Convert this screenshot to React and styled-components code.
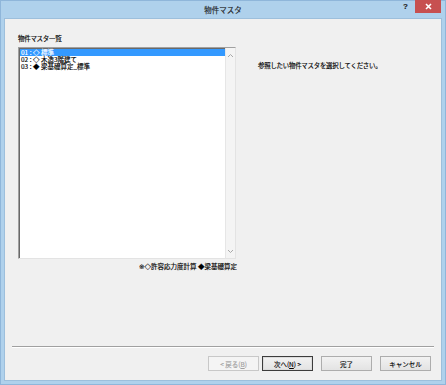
import React from "react";
import styled, { createGlobalStyle } from "styled-components";

const GlobalStyle = createGlobalStyle`
  html, body {
    margin: 0;
    padding: 0;
    background: #afd1ec;
  }
  #root {
    width: 446px;
    height: 385px;
  }
`;

const FONT = `"Noto Sans CJK JP", "Noto Sans", sans-serif`;

const rows = [
  { id: "01", mark: "◇", name: "標準" },
  { id: "02", mark: "◇", name: "木造3階建て" },
  { id: "03", mark: "◆", name: "梁基礎算定_標準" },
];

const Chevron = ({ up }) => (
  <svg width="7" height="5" viewBox="0 0 7 5">
    <path
      d={up ? "M1 4 L3.5 1.5 L6 4" : "M1 1 L3.5 3.5 L6 1"}
      fill="none"
      stroke="#a8a8a8"
      strokeWidth="1"
    />
  </svg>
);

const App = () => {
  return (
    <Window>
      <GlobalStyle />
      <TitleBar>
        <span />
        <Title>物件マスタ</Title>
        <Controls>
          <Help>?</Help>
          <Close>
            <svg width="7" height="7" viewBox="0 0 7 7">
              <path d="M1 1 L6 6 M6 1 L1 6" stroke="#fff" strokeWidth="1.6" />
            </svg>
          </Close>
        </Controls>
      </TitleBar>
      <Frame>
        <Client>
          <Body>
            <LeftColumn>
              <Label>物件マスタ一覧</Label>
              <ListBox>
                <Rows>
                  {rows.map((r, i) => (
                    <Row key={r.id} selected={i === 0}>
                      {r.id} : {r.mark} {r.name}
                    </Row>
                  ))}
                </Rows>
                <ScrollBar>
                  <Chevron up />
                  <Chevron />
                </ScrollBar>
              </ListBox>
              <Legend>
                <Mark>※</Mark>◇許容応力度計算 ◆梁基礎算定
              </Legend>
            </LeftColumn>
            <Hint>参照したい物件マスタを選択してください。</Hint>
          </Body>
          <Separator />
          <Footer>
            <Button disabled>
              &lt; 戻る(<u>B</u>)
            </Button>
            <Button primary>
              次へ(<u>N</u>) &gt;
            </Button>
            <Button spaced>完了</Button>
            <Button spaced>キャンセル</Button>
          </Footer>
        </Client>
      </Frame>
    </Window>
  );
};

const Window = styled.div`
  width: 446px;
  height: 385px;
  box-sizing: border-box;
  display: flex;
  flex-direction: column;
  background: #afd1ec;
  box-shadow: inset 0 0 0 1px #8fb6da;
  font-family: ${FONT};
  color: #000;
  -webkit-text-stroke: 0.15px currentColor;
`;

const TitleBar = styled.div`
  height: 19px;
  display: grid;
  grid-template-columns: 1fr auto 1fr;
  align-items: start;
`;

const Title = styled.div`
  font-size: 7.5px;
  line-height: 8px;
  margin-top: 6px;
  color: #1e1e1e;
`;

const Controls = styled.div`
  display: flex;
  justify-content: flex-end;
  align-items: flex-start;
  gap: 7px;
  padding-right: 5px;
`;

const Help = styled.div`
  font-family: "Liberation Sans", sans-serif;
  font-weight: bold;
  font-size: 8px;
  line-height: 8px;
  margin-top: 3px;
  color: #222;
`;

const Close = styled.div`
  width: 26px;
  height: 13px;
  background: #c75050;
  display: flex;
  align-items: center;
  justify-content: center;
`;

const Frame = styled.div`
  flex: 1;
  display: flex;
  padding: 0 5px 5px;
`;

const Client = styled.div`
  flex: 1;
  display: flex;
  flex-direction: column;
  background: #f0f0f0;
  box-shadow: 0 0 0 1px #9dbfdc;
`;

const Body = styled.div`
  flex: 1;
  display: grid;
  grid-template-columns: 218px 1fr;
  column-gap: 22px;
  padding: 14px 0 0 13px;
`;

const LeftColumn = styled.div`
  display: flex;
  flex-direction: column;
`;

const Label = styled.div`
  font-size: 6.5px;
  line-height: 10px;
  height: 10px;
  letter-spacing: -0.3px;
  margin-bottom: 4px;
`;

const ListBox = styled.div`
  height: 212px;
  box-sizing: border-box;
  display: flex;
  background: #fff;
  border: 1px solid;
  border-color: #a0a0a0 #e3e3e3 #e3e3e3 #a0a0a0;
  box-shadow: inset 1px 1px 0 #696969;
`;

const Rows = styled.div`
  flex: 1;
  display: flex;
  flex-direction: column;
  padding: 1px 0 0 1px;
`;

const Row = styled.div`
  height: 7px;
  line-height: 7px;
  font-size: 6.5px;
  padding-left: 1px;
  white-space: nowrap;
  background: ${(p) => (p.selected ? "#3399ff" : "transparent")};
  color: ${(p) => (p.selected ? "#fff" : "#000")};
`;

const ScrollBar = styled.div`
  width: 9px;
  display: flex;
  flex-direction: column;
  justify-content: space-between;
  align-items: center;
  padding: 5px 0 4px;
  background: #f4f4f4;
  border-left: 1px solid #e6e6e6;
`;

const Legend = styled.div`
  margin-top: 3px;
  font-size: 6.5px;
  line-height: 8px;
  text-align: right;
  margin-right: -1px;
`;

const Mark = styled.span`
  font-family: "DejaVu Sans", sans-serif;
  font-variant-emoji: text;
  color: #000;
`;

const Hint = styled.div`
  padding-top: 29px;
  font-size: 6.4px;
  line-height: 8px;
  letter-spacing: -0.2px;
  white-space: nowrap;
`;

const Separator = styled.div`
  margin: 0 7px;
  height: 1px;
  background: #a0a0a0;
  border-bottom: 1px solid #fff;
`;

const Footer = styled.div`
  display: flex;
  justify-content: flex-end;
  padding: 8px 10px 9px 0;
`;

const Button = styled.div`
  width: 51px;
  height: 15px;
  box-sizing: border-box;
  margin-left: ${(p) => (p.spaced ? "8px" : "3px")};
  display: flex;
  align-items: center;
  justify-content: center;
  font-size: 6.5px;
  line-height: 8px;
  background: linear-gradient(#f2f2f2, #e3e3e3);
  border: 1px solid ${(p) => (p.primary ? "#3c3c3c" : p.disabled ? "#c8c8c8" : "#adadad")};
  box-shadow: ${(p) => (p.primary ? "inset 0 0 0 1px #dcdcdc" : "none")};
  color: ${(p) => (p.disabled ? "#a0a0a0" : "#000")};
  ${(p) => p.disabled && "background: #f4f4f4;"}

  u {
    text-decoration-thickness: 0.5px;
  }
`;

export default App;
